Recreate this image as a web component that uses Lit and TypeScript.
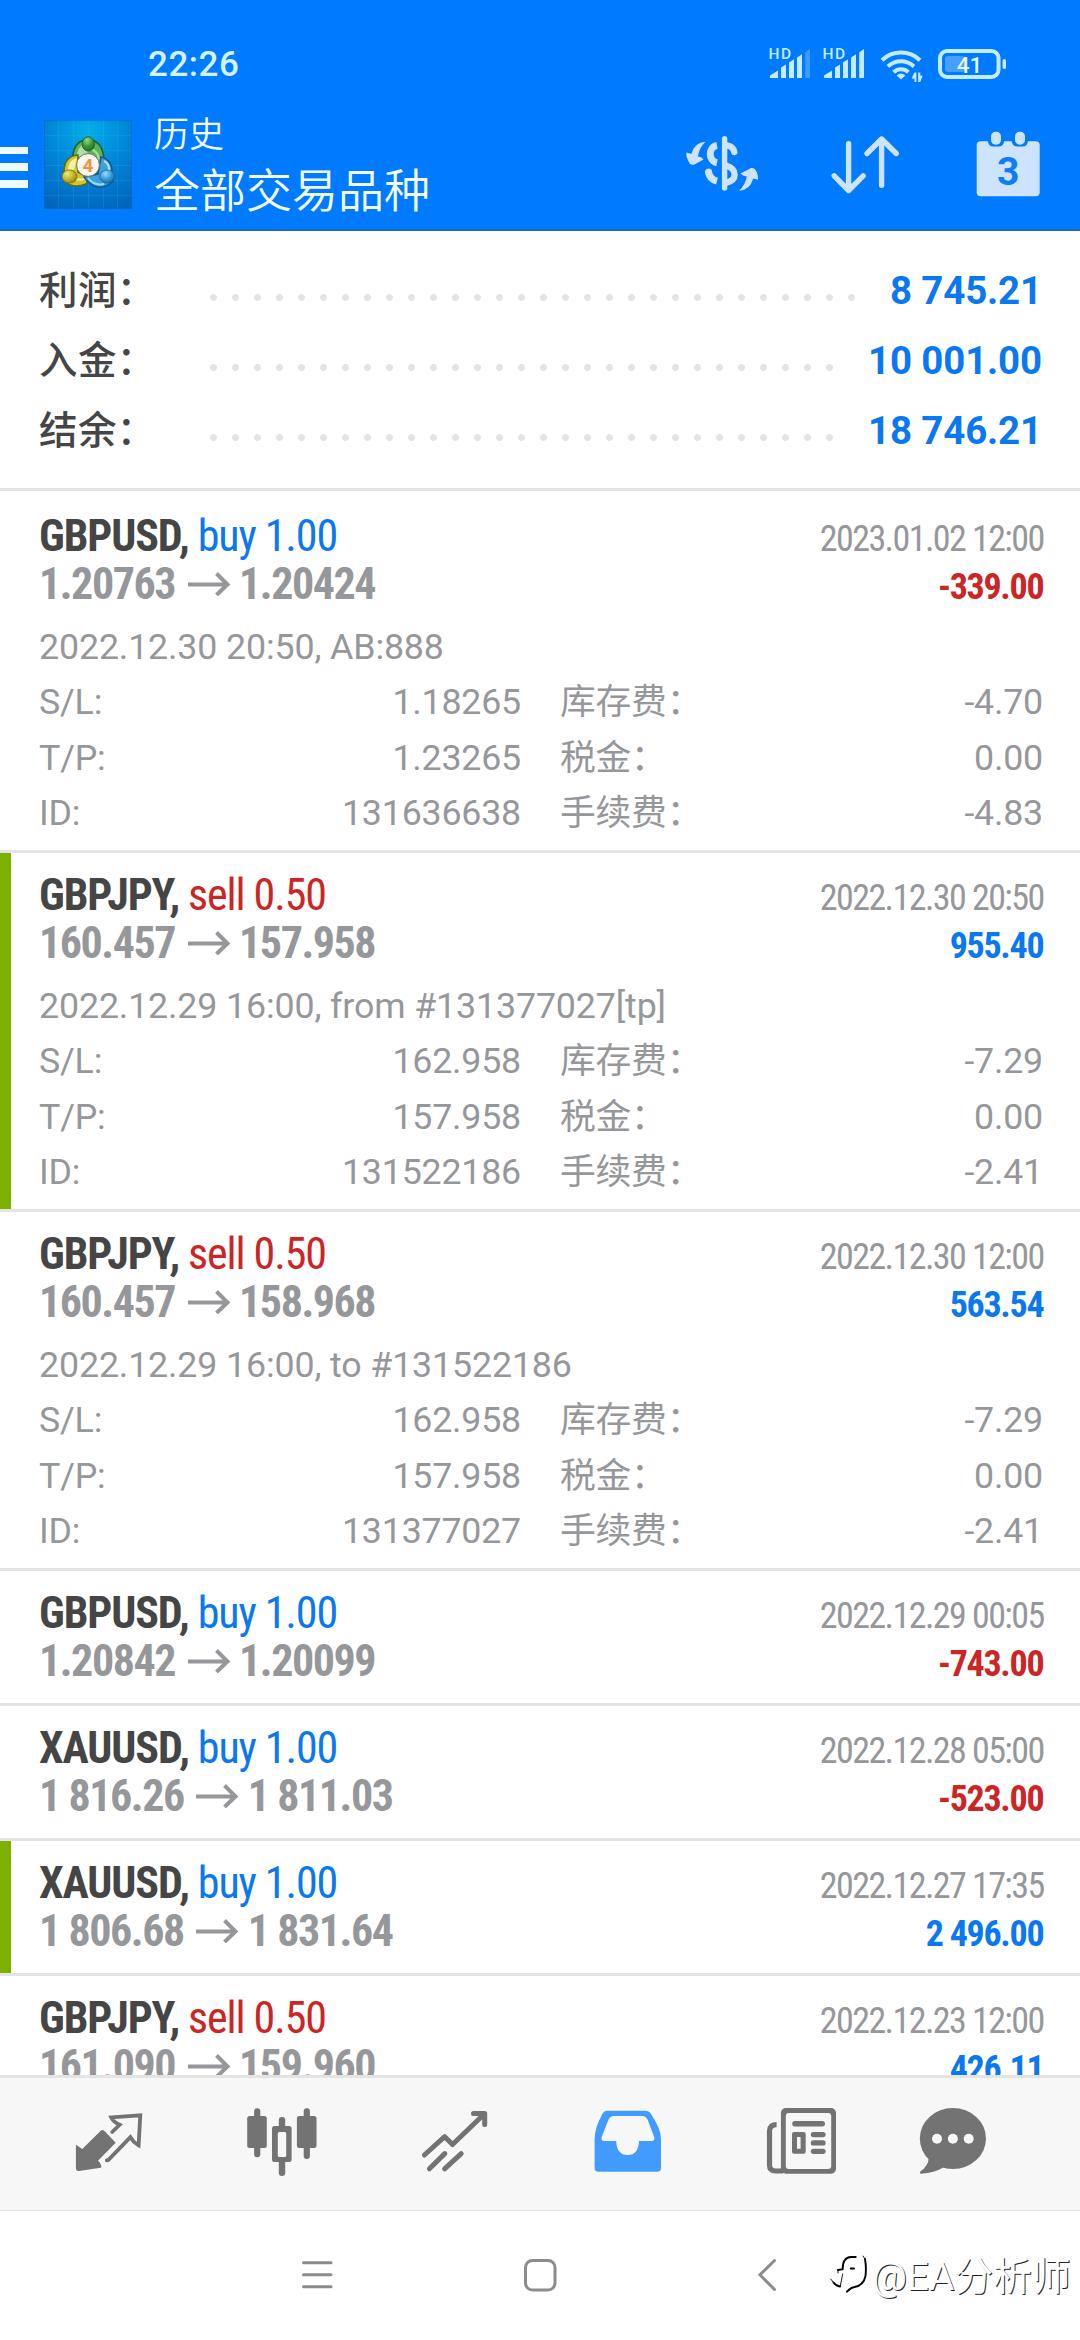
import { LitElement, html, svg, css, nothing } from "lit";
import { customElement, property } from "lit/decorators.js";
import { classMap } from "lit/directives/class-map.js";

interface Trade {
  symbol: string;
  side: "buy" | "sell";
  volume: string;
  open: string;
  close: string;
  time: string;
  profit: string;
  marked?: boolean;
  details?: { note: string; sl: string; tp: string; id: string; swap: string; tax: string; fee: string };
}

const SUMMARY: [string, string][] = [
  ["利润：", "8 745.21"],
  ["入金：", "10 001.00"],
  ["结余：", "18 746.21"],
];

const TRADES: Trade[] = [
  {
    symbol: "GBPUSD", side: "buy", volume: "1.00", open: "1.20763", close: "1.20424",
    time: "2023.01.02 12:00", profit: "-339.00",
    details: { note: "2022.12.30 20:50, AB:888", sl: "1.18265", tp: "1.23265", id: "131636638", swap: "-4.70", tax: "0.00", fee: "-4.83" },
  },
  {
    symbol: "GBPJPY", side: "sell", volume: "0.50", open: "160.457", close: "157.958",
    time: "2022.12.30 20:50", profit: "955.40", marked: true,
    details: { note: "2022.12.29 16:00, from #131377027[tp]", sl: "162.958", tp: "157.958", id: "131522186", swap: "-7.29", tax: "0.00", fee: "-2.41" },
  },
  {
    symbol: "GBPJPY", side: "sell", volume: "0.50", open: "160.457", close: "158.968",
    time: "2022.12.30 12:00", profit: "563.54",
    details: { note: "2022.12.29 16:00, to #131522186", sl: "162.958", tp: "157.958", id: "131377027", swap: "-7.29", tax: "0.00", fee: "-2.41" },
  },
  { symbol: "GBPUSD", side: "buy", volume: "1.00", open: "1.20842", close: "1.20099", time: "2022.12.29 00:05", profit: "-743.00" },
  { symbol: "XAUUSD", side: "buy", volume: "1.00", open: "1 816.26", close: "1 811.03", time: "2022.12.28 05:00", profit: "-523.00" },
  { symbol: "XAUUSD", side: "buy", volume: "1.00", open: "1 806.68", close: "1 831.64", time: "2022.12.27 17:35", profit: "2 496.00", marked: true },
  { symbol: "GBPJPY", side: "sell", volume: "0.50", open: "161.090", close: "159.960", time: "2022.12.23 12:00", profit: "426.11" },
];

const signalIcon = (full: boolean) => svg`
  <svg class="signal" viewBox="0 0 44 34" width="44" height="34">
    <text x="0.5" y="13.2" font-size="15.5" font-weight="500" textLength="22.5">HD</text>
    <path d="M2 32V29.5L10 24.5V32ZM13 32V21.5L18 18.5V32ZM21 32V16.5L26 13.2V32ZM29 32V11.5L34 8.2V32Z"/>
    <path d="M37.2 32V6.2L42 3V32Z" opacity=${full ? 1 : 0.3} />
  </svg>`;

@customElement("status-bar")
export class StatusBar extends LitElement {
  static styles = css`
    :host { display: block; font-family: Roboto, sans-serif; color: #d2f2ff; }
    .bar { display: flex; height: 110px; box-sizing: border-box; padding: 40px 74px 0 148px; justify-content: space-between; }
    .clock { font-size: 35px; font-weight: 500; line-height: 50px; letter-spacing: 0.5px; }
    .tray { display: flex; padding-top: 6px; }
    svg { display: block; fill: #c4ecff; }
    .signal { margin-right: 10px; }
    .wifi { margin: 0 10px 0 2px; }
    .stroke { fill: none; stroke: #c4ecff; stroke-width: 4; }
    .level { fill: #46a0ff; }
    .charge { fill: #e6f8ff; }
  `;
  render() {
    return html`<div class="bar">
      <div class="clock">22:26</div>
      <div class="tray">
        ${signalIcon(false)}${signalIcon(true)}
        <svg class="wifi" viewBox="0 0 48 38" width="48" height="38">
          <path class="stroke" d="M4 14.200A27.500 27.500 0 0 1 42 14.200"/>
          <path class="stroke" d="M10 20.500A19 19 0 0 1 36 20.500"/>
          <path class="stroke" d="M15.600 26.200A11 11 0 0 1 30.400 26.200"/>
          <path d="M23 33.500L18.600 29.400Q23 25.400 27.400 29.400Z"/>
          <path d="M36.400 36V32.600L34.300 33V30.800L36.400 26.500H38.400V36ZM40.200 26.500H42.300V29.800L44.600 29.600L42.300 36H40.200Z"/>
        </svg>
        <svg viewBox="0 0 70 34" width="70" height="34">
          <rect class="level" x="9" y="10" width="20" height="16" rx="3"/>
          <rect class="stroke" x="4" y="5" width="58.500" height="26" rx="7"/>
          <rect x="66.600" y="13" width="3.400" height="10" rx="1.600"/>
          <text class="charge" x="33.500" y="26.600" font-size="22.500" font-weight="500" text-anchor="middle">41</text>
        </svg>
      </div>
    </div>`;
  }
}

@customElement("app-header")
export class AppHeader extends LitElement {
  static styles = css`
    :host { display: block; color: #f2fbff; font-family: Roboto, "Noto Sans CJK SC", sans-serif; }
    .bar { display: flex; height: 119px; }
    .burger { width: 28px; display: flex; flex-direction: column; gap: 9.3px; padding-top: 36.5px; margin-right: 16px; }
    .burger span { height: 7.7px; background: #eefaff; }
    .logo { display: block; margin-top: 10px; }
    .titles { margin-left: 22px; flex: 1; font-weight: 350; white-space: nowrap; }
    .small { font-size: 35px; line-height: 40px; margin-top: 6px; }
    .large { font-size: 46px; line-height: 56px; margin-top: 7px; }
    .actions { display: flex; padding-top: 18px; margin-right: 32px; }
    .actions svg { display: block; fill: #cce4ff; }
    .line { fill: none; stroke: #cce4ff; stroke-width: 5.4; stroke-linecap: round; stroke-linejoin: round; }
    .money { margin-right: 62px; }
    .sort { margin-right: 65px; }
    .cap { stroke-linecap: butt; stroke-width: 7; }
    .hook { stroke-width: 6.4; }
  `;
  render() {
    return html`<div class="bar">
      <div class="burger"><span></span><span></span><span></span></div>
      <svg class="logo" viewBox="0 0 88 89" width="88" height="89">
        <defs>
          <radialGradient id="bg" cx="0.5" cy="0.12" r="0.95">
            <stop offset="0" stop-color="#04aeea"/><stop offset="0.5" stop-color="#0084d8"/><stop offset="1" stop-color="#0064bc"/>
          </radialGradient>
          <radialGradient id="g" cx="0.4" cy="0.25" r="0.8"><stop offset="0" stop-color="#9ad890"/><stop offset="0.5" stop-color="#3f9a3a"/><stop offset="1" stop-color="#1d6a24"/></radialGradient>
          <radialGradient id="y" cx="0.35" cy="0.3" r="0.8"><stop offset="0" stop-color="#f2ea78"/><stop offset="0.55" stop-color="#c2b22a"/><stop offset="1" stop-color="#86800e"/></radialGradient>
          <radialGradient id="b" cx="0.4" cy="0.3" r="0.8"><stop offset="0" stop-color="#9adcf8"/><stop offset="0.5" stop-color="#3a9cdc"/><stop offset="1" stop-color="#10609c"/></radialGradient>
        </defs>
        <rect width="88" height="89" fill="url(#bg)"/>
        <path d="M0 15.500H88M0 30.500H88M0 45.500H88M0 60.500H88M0 75.500H88M14.500 0V89M29.500 0V89M44.500 0V89M59.500 0V89M73.500 0V89" stroke="#4cc0f4" stroke-opacity="0.16" fill="none"/>
        <path d="M0 0.700H88M0.500 0V89M87.500 0V89" stroke="#0a66b8" stroke-opacity="0.6" fill="none"/>
        <path d="M29 40Q28 24 40 20H48Q60 24 60 42Q54 50 50 44L44 34L35 42Z" fill="#5cb457" stroke="#1d5f3a" stroke-width="1.600"/>
        <path d="M33 38Q32 27 41 24L45 32Z" fill="#bfe6b4" opacity="0.85"/>
        <path d="M47 29Q57 33 54 44" fill="none" stroke="#a4dc98" stroke-width="2"/>
        <path d="M34 35Q20 36 20 52L21 62Q30 69 42 64L45 58L34 52Z" fill="#d2c62e" stroke="#5d6a20" stroke-width="1.600"/>
        <path d="M24 50Q24 40 33 38L30 50Z" fill="#f6f0a0"/>
        <path d="M30 58Q38 62 43 57" fill="none" stroke="#f2ea88" stroke-width="2.400"/>
        <path d="M57 37Q69 40 68 54L69 61Q60 70 50 66Q42 61 40 57L54 54Z" fill="#3f9fda" stroke="#125a8c" stroke-width="1.600"/>
        <path d="M60 41Q66 44 65 52" fill="none" stroke="#a6e0fa" stroke-width="2.400"/>
        <path d="M44 58Q50 66 60 64" fill="none" stroke="#9cdaf6" stroke-width="2"/>
        <ellipse cx="44.300" cy="24" rx="6.200" ry="7.200" fill="url(#g)" stroke="#1b5c26" stroke-width="0.800"/>
        <ellipse cx="25.500" cy="56.500" rx="7.500" ry="6.600" fill="url(#y)" stroke="#66681a" stroke-width="0.700"/>
        <ellipse cx="63" cy="56.500" rx="7.300" ry="6.600" fill="url(#b)" stroke="#14609a" stroke-width="0.700"/>
        <circle cx="44" cy="45" r="11.400" fill="#f8f6f2" stroke="#6f7a5a" stroke-width="1"/>
        <text x="44" y="51.800" font-family="Roboto" font-size="19" font-weight="700" text-anchor="middle" fill="#f0923c">4</text>
      </svg>
      <div class="titles">
        <div class="small">历史</div>
        <div class="large">全部交易品种</div>
      </div>
      <div class="actions">
        <svg class="money" viewBox="0 0 83 72" width="83" height="72">
          <path class="line" d="M44.600 10.600V60"/>
          <path class="line cap" d="M37 17.500C28 19 28 33 37 34.700M37 53.200Q29 51 28.400 43"/>
          <circle cx="28.600" cy="44" r="3.500"/>
          <path class="line hook" d="M46 17.200Q53.500 18.500 54.300 24M46 37.500Q54.600 40 54.600 46.500Q54.600 53 46 54.800"/>
          <path d="M25.500 13.800Q14.500 14.500 11.300 26L6.500 24.600Q5.300 28.500 10 36Q12 37.400 15 36.200L23.500 31.600Q21.500 28.800 18 28.600Q19 20 25.500 13.800Z"/>
          <path d="M59 62.800Q70 62 73.200 50.400L78 51.800Q78.600 46 74.800 41Q73 39.600 70.600 40.200L60.500 45.400Q62.500 47.800 66.800 48.400Q65.500 56.500 59 62.800Z"/>
        </svg>
        <svg class="sort" viewBox="0 0 80 72" width="80" height="72">
          <path class="line" d="M23.600 15.700V62.500M9.200 47.800L23.600 62.500L38.200 47.800M56.600 57.300V11M42 25.500L56.600 11L71.200 25.500"/>
        </svg>
        <svg viewBox="0 0 78 72" width="78" height="72">
          <rect x="6.700" y="13.200" width="63" height="55" rx="4"/>
          <path d="M17.800 10H34.200V13Q33.500 18.600 28.500 18.600H23.500Q18.500 18.600 17.800 13ZM41.600 10H58V13Q57.500 18.600 52.500 18.600H47.500Q42.500 18.600 41.600 13Z" fill="#007aff"/>
          <rect x="21" y="3.700" width="10" height="13" rx="4.600"/><rect x="45" y="3.700" width="10" height="13" rx="4.600"/>
          <text x="38.300" y="57" font-size="39" font-weight="700" text-anchor="middle" fill="#0d7df8">3</text>
        </svg>
      </div>
    </div>`;
  }
}

@customElement("account-summary")
export class AccountSummary extends LitElement {
  static styles = css`
    :host { display: block; }
    .panel { height: 260px; box-sizing: border-box; padding: 21px 38px 0 39px; border-bottom: 3px solid #e4e4e4; margin-bottom: 3px; background: #fff; }
    .row { display: flex; height: 70px; font: 500 38.5px/77px Roboto, "Noto Sans CJK SC", sans-serif; white-space: nowrap; }
    .label { width: 171px; color: #454545; letter-spacing: 0.4px; }
    .dots { flex: 1; max-width: 623px; height: 7px; margin-top: 42px; background: radial-gradient(circle at 3.5px 3.5px, #e4e4e4 3.1px, transparent 3.8px) 0 0 / 22px 7px repeat-x; }
    .dots.long { max-width: 645px; }
    .value { color: #0a78f0; font-weight: 700; letter-spacing: -0.15px; text-align: right; margin-left: auto; }
  `;
  render() {
    return html`<div class="panel">${SUMMARY.map(([label, value]) => html`
      <div class="row"><span class="label">${label}</span><span class=${classMap({ dots: true, long: value.length < 9 })}></span><span class="value">${value}</span></div>`)}
    </div>`;
  }
}

@customElement("trade-item")
export class TradeItem extends LitElement {
  @property({ attribute: false }) trade!: Trade;
  static styles = css`
    :host { display: block; flex: none; font-family: Roboto, "Noto Sans CJK SC", sans-serif; color: #96979a; white-space: nowrap; }
    .item { height: 132px; padding: 18px 38px 0 39px; box-sizing: content-box; border-bottom: 3px solid #e4e4e4; background: #fff; }
    .item { box-sizing: border-box; height: 135px; }
    .marked { background: linear-gradient(90deg, #7cb100 11px, #fff 11px); }
    .detailed { height: 359px; }
    .head { display: flex; justify-content: space-between; height: 96px; font-family: "Roboto Condensed", sans-serif; }
    .left { font-size: 44px; line-height: 48px; letter-spacing: -1.1px; }
    .right { font-size: 36px; line-height: 48px; padding-top: 3px; text-align: right; }
    .symbol { font-weight: 700; color: #454545; }
    .buy, .gain { color: #0a78f0; }
    .sell, .loss { color: #cb2525; }
    .prices { font-weight: 700; display: flex; letter-spacing: -1.45px; }
    .arrow { width: 43px; height: 24px; margin: 12px 8.5px 0 12.5px; fill: none; stroke: #96979a; stroke-width: 4; }
    .time { letter-spacing: -1.57px; margin-right: -1.6px; }
    .profit { font-weight: 700; letter-spacing: -1.3px; margin-right: -1.3px; }
    .note { font-size: 35.75px; line-height: 48px; letter-spacing: -0.13px; margin: 15px 0 4px; }
    .grid { display: grid; grid-template-columns: 150px 332px 39px 483px; grid-auto-rows: 55.5px; line-height: 55.5px; font-size: 35.75px; letter-spacing: -0.2px; }
    .num { text-align: right; }
    .cjk { letter-spacing: -0.2px; }
    .wide { grid-column: 4; display: flex; justify-content: space-between; }
  `;
  render() {
    const t = this.trade;
    const d = t.details;
    const rows = d ? [["S/L:", d.sl, "库存费：", d.swap], ["T/P:", d.tp, "税金：", d.tax], ["ID:", d.id, "手续费：", d.fee]] : [];
    return html`<div class=${classMap({ item: true, marked: !!t.marked, detailed: !!d })}>
      <div class="head">
        <div class="left">
          <div><span class="symbol">${t.symbol},</span> <span class=${t.side}>${t.side} ${t.volume}</span></div>
          <div class="prices">${t.open}<svg class="arrow" viewBox="0 0 43 24"><path d="M0 12.500H39M28.500 1.500L39.500 12.500L28.500 23"/></svg>${t.close}</div>
        </div>
        <div class="right">
          <div class="time">${t.time}</div>
          <div class=${"profit " + (t.profit.startsWith("-") ? "loss" : "gain")}>${t.profit}</div>
        </div>
      </div>
      ${d ? html`<div class="note">${d.note}</div>
        <div class="grid">${rows.map(([a, b, c, e]) => html`<span>${a}</span><span class="num">${b}</span><span class="wide"><span class="cjk">${c}</span><span>${e}</span></span>`)}</div>` : nothing}
    </div>`;
  }
}

@customElement("tab-bar")
export class TabBar extends LitElement {
  static styles = css`
    :host { display: block; }
    .tabs { height: 136px; box-sizing: border-box; border-top: 3px solid #e4e4e4; border-bottom: 1.5px solid #e6e6e6; background: #f7f7f7; display: grid; grid-template-columns: repeat(5, 173px) 132px; padding-left: 22px; justify-items: center; padding-top: 28px; }
    svg { display: block; width: 72px; height: 72px; fill: #737373; }
    .s { fill: none; stroke: #737373; stroke-linecap: round; stroke-linejoin: round; }
    .sharp { stroke-linejoin: miter; }
    .butt { stroke-linecap: butt; }
    .bg { fill: #f7f7f7; }
    .active { fill: #429bff; }
  `;
  render() {
    return html`<div class="tabs">
      <svg viewBox="0 0 72 72">
        <path d="M2.900 38.800L9.300 43L28 24.600Q29.400 23.400 31 24.600L42.700 36.700L25 54.800Q27.500 56.500 28.600 60.700Q28 62 26 62L6 65Q2.900 65.200 2.900 62Z"/>
        <path class="s sharp" stroke-width="3.800" d="M39.200 26L46.600 18.800Q40.500 16 38.200 11.400L67.300 9.300L65.600 39.400Q60.500 36.500 57.400 31.200L35.500 53.800L33.800 54.400"/>
      </svg>
      <svg viewBox="0 0 72 72">
        <rect x="1.200" y="10" width="19.600" height="32" rx="2.500"/><rect x="8.100" y="2.300" width="6.200" height="49" rx="3"/>
        <rect x="26" y="20" width="19.600" height="36" rx="2.500"/><rect x="32.800" y="11" width="6.400" height="59" rx="3"/><rect class="bg" x="31.800" y="26" width="8.400" height="25" rx="1.500"/>
        <rect x="50.900" y="10" width="19.600" height="32" rx="2.500"/><rect x="57.700" y="2.300" width="6.200" height="50.700" rx="3"/>
      </svg>
      <svg viewBox="0 0 72 72">
        <path class="s" stroke-width="5" d="M5.400 49L25.700 30.700L33.500 38.500L65.500 7.800M54.500 7.600H65.700V18.500M10.400 62.800L25.800 47.600M25.600 62.800L42.200 47.600"/>
      </svg>
      <svg class="active" viewBox="0 0 72 72">
        <path d="M14.600 4.700H53Q57 4.700 59 8Q69 23 69 33V62Q69 65.700 65.300 65.700H6.300Q2.600 65.700 2.600 62V33Q2.600 22 10.600 7.500Q12.200 4.700 14.600 4.700Z"/>
        <path class="bg" d="M22 10H50Q54 10 55.500 13.500L62.400 31.500Q62.700 35 59.500 35H47Q46.500 49 35.600 49Q24.700 49 24.200 35H12.500Q9.200 35 9.500 31.500L16.600 13.500Q18 10 22 10Z"/>
      </svg>
      <svg viewBox="0 0 72 72">
        <path class="s butt" stroke-width="5.200" d="M11.600 18.600Q4.500 18.600 4.500 25V59Q4.500 65 10.500 65H18"/>
        <rect x="15.900" y="2" width="55.100" height="65.700" rx="5"/><rect class="bg" x="20.800" y="7" width="45.400" height="56" rx="3"/>
        <rect x="27.200" y="15" width="32.800" height="5.400" rx="2.700"/>
        <path fill-rule="evenodd" d="M29 26H38.700Q40.700 26 40.700 28V45.700Q40.700 47.700 38.700 47.700H29Q27 47.700 27 45.700V28Q27 26 29 26ZM32 31V42.700H35.600V31Z"/>
        <rect x="45.800" y="26" width="14.800" height="5.200" rx="2.600"/><rect x="45.800" y="34.300" width="14.800" height="5.200" rx="2.600"/><rect x="45.800" y="42.700" width="14.800" height="5.200" rx="2.600"/>
      </svg>
      <svg viewBox="0 0 72 72">
        <ellipse cx="35.900" cy="32.500" rx="33.100" ry="30.500"/>
        <path d="M9 48L11.800 51.500Q11.500 60 3.200 65.500Q2.200 67.700 4.500 67.700Q17 67.300 26.600 61.300L30 55Z"/>
        <circle class="bg" cx="20" cy="32.700" r="5"/><circle class="bg" cx="35.900" cy="32.700" r="5"/><circle class="bg" cx="51.700" cy="32.700" r="5"/>
      </svg>
    </div>`;
  }
}

@customElement("system-nav")
export class SystemNav extends LitElement {
  static styles = css`
    :host { display: block; position: relative; height: 129px; background: #fff; }
    .keys { display: flex; padding: 43px 0 0 297px; }
    svg { display: block; fill: none; stroke: #8c8c8c; stroke-width: 3; stroke-linecap: round; }
    .keys svg { margin-right: 184px; }
    .mark { position: absolute; left: 829px; top: 36px; display: flex; align-items: center; gap: 1px; color: #fff; white-space: nowrap; font: 400 38.8px/60px Roboto, "Noto Sans CJK SC", sans-serif; text-shadow: 1px 1px 0.6px #222; }
    .mark svg { width: 42px; height: 46px; margin-bottom: 6px; stroke: #000; stroke-width: 1.9; }
    .mark .thin { stroke-width: 0.9; }
  `;
  render() {
    return html`<div class="keys">
        <svg viewBox="0 0 40 40" width="40" height="40"><path d="M6.500 8.700H34M6.500 20.700H34M6.500 32.700H34"/></svg>
        <svg viewBox="0 0 40 40" width="40" height="40"><rect x="4.500" y="6.500" width="29.500" height="29.500" rx="7"/></svg>
        <svg viewBox="0 0 40 40" width="40" height="40"><path d="M29.500 6.500L15 20.800L29.500 35.500"/></svg>
      </div>
      <div class="mark">
        <svg viewBox="0 0 42 46">
          <path d="M9 19L13.700 18.200Q13.500 6.500 22 6H26.700M21.700 17.500H25M36 8Q37.500 16 36.500 25Q34.500 34.500 25.500 36Q22 36.500 18 40.700M11 35.500Q7 35 4.500 31.500"/>
          <path class="thin" d="M13.700 23L11.200 35.500M4.500 31.500L1.700 28M34 5L36 8M9 19V22"/>
        </svg>
        <span>@EA分析师</span>
      </div>`;
  }
}

@customElement("app-root")
export class AppRoot extends LitElement {
  static styles = css`
    :host { display: block; }
    .screen { width: 1080px; height: 2340px; display: flex; flex-direction: column; overflow: hidden; background: #fff; }
    .top { height: 231px; box-sizing: border-box; background: #007aff; border-bottom: 2px solid #1c6dc0; flex: none; }
    .list { flex: 1; min-height: 0; overflow: hidden; display: flex; flex-direction: column; }
    tab-bar, system-nav, account-summary { flex: none; }
  `;
  render() {
    return html`<div class="screen">
      <div class="top"><status-bar></status-bar><app-header></app-header></div>
      <account-summary></account-summary>
      <div class="list">${TRADES.map((t) => html`<trade-item .trade=${t}></trade-item>`)}</div>
      <tab-bar></tab-bar>
      <system-nav></system-nav>
    </div>`;
  }
}
